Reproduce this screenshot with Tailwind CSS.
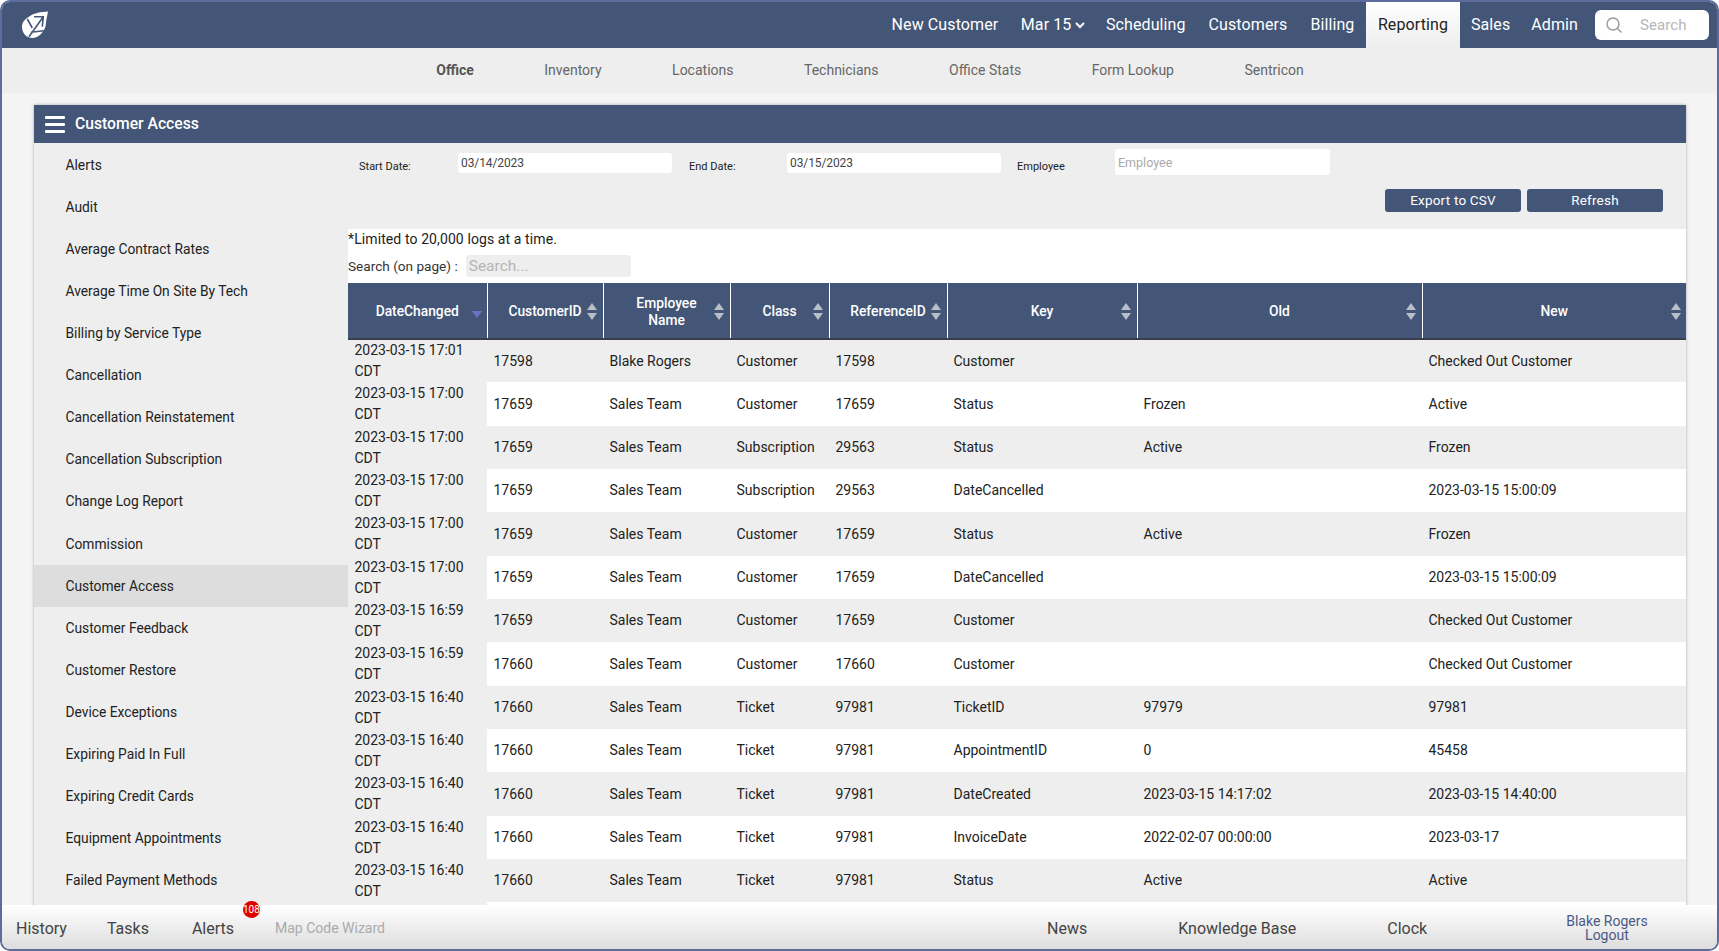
<!DOCTYPE html>
<html lang="en">
<head>
  <meta charset="UTF-8" />
  <title>Customer Access</title>
  <script src="https://cdn.jsdelivr.net/npm/@tailwindcss/browser@4"></script>
</head>
<body class="bg-white font-['Roboto',sans-serif]">
  <div id="app" class="h-[951px] flex flex-col overflow-hidden border-2 border-[#5d6c9c] rounded-[10px] bg-[#f4f4f4] text-[14px] text-[#222]">
    <!-- top nav -->
    <header class="h-[46px] shrink-0 flex items-center bg-[#435677] text-white text-[16px] tracking-[0.1px]">
      <svg class="ml-[20px] w-[26px] h-[28px]" viewBox="0 0 26 28">
        <path d="M26 .5C19 1 12 2 8 5 3 8 0 11 0 16c0 4 2 8 6 10 4 2 9 1 13-3 4-4 5-8 5-12z" fill="white" />
        <path d="M7 25.7L21.3 5.7M12 5.7h9.3l-1 10M5.3 8l5 9M8.7 21.3L22 19.7" fill="none" stroke="#435677" stroke-width="1.6" />
      </svg>
      <nav class="ml-auto flex items-center h-full">
        <a class="px-[11.5px]">New Customer</a>
        <a class="pl-[11px] pr-[9px] flex items-center gap-1">Mar 15
          <svg class="w-[10px] h-[7px]" viewBox="0 0 10 7" fill="none" stroke="white" stroke-width="2"><path d="M1 1l4 4 4-4" /></svg>
        </a>
        <a class="px-[11.5px]">Scheduling</a>
        <a class="px-[11.5px]">Customers</a>
        <a class="px-[11.5px]">Billing</a>
        <a class="w-[94px] h-full flex items-center justify-center bg-gradient-to-b from-white to-[#eeeeee] text-[#222]">Reporting</a>
        <a class="pl-[11px] pr-[10.5px]">Sales</a>
        <a class="pl-[10.5px] pr-[11px]">Admin</a>
        <div class="ml-[6px] mr-[8px] w-[114px] h-[30px] bg-white rounded-[6px] flex items-center text-[#b5b5b5] text-[15px]">
          <svg class="ml-[10px] w-[18px] h-[18px]" viewBox="0 0 18 18" fill="none" stroke="#9a9a9a" stroke-width="1.4"><circle cx="8" cy="8" r="6" /><path d="M12.5 12.5l4 4" /></svg>
          <span class="ml-[17px]">Search</span>
        </div>
      </nav>
    </header>
    <!-- sub nav -->
    <nav class="h-[45px] shrink-0 flex items-center justify-center gap-[70.5px] bg-[#eeeeee] text-[#666] text-[14px] pl-[21px]">
      <a class="font-bold text-[#555]">Office</a>
      <a>Inventory</a>
      <a>Locations</a>
      <a>Technicians</a>
      <a>Office Stats</a>
      <a>Form Lookup</a>
      <a>Sentricon</a>
    </nav>
    <!-- report panel -->
    <main class="flex-1 min-h-0 overflow-hidden pl-[32px] pr-[31px] pt-[12px]">
      <div class="shadow-[0_0_3px_rgba(0,0,0,0.3)] bg-[#eeeeee]">
        <div class="h-[38px] flex items-center bg-[#435677] text-white">
          <svg class="ml-[11px] w-[20px] h-[17px]" viewBox="0 0 20 17" fill="white"><rect y="0" width="20" height="3" rx="1" /><rect y="7" width="20" height="3" rx="1" /><rect y="14" width="20" height="3" rx="1" /></svg>
          <h1 class="ml-[10px] text-[15.7px] font-medium">Customer Access</h1>
        </div>
        <div class="flex">
          <aside class="w-[314px] shrink-0 bg-[#eeeeee]">
            <ul class="pt-[1px] text-[13.8px] [&_li]:h-[42.1px] [&_li]:pl-[31.5px] [&_li]:flex [&_li]:items-center">
              <li>Alerts</li>
              <li>Audit</li>
              <li>Average Contract Rates</li>
              <li>Average Time On Site By Tech</li>
              <li>Billing by Service Type</li>
              <li>Cancellation</li>
              <li>Cancellation Reinstatement</li>
              <li>Cancellation Subscription</li>
              <li>Change Log Report</li>
              <li>Commission</li>
              <li class="bg-[#dddddd]">Customer Access</li>
              <li>Customer Feedback</li>
              <li>Customer Restore</li>
              <li>Device Exceptions</li>
              <li>Expiring Paid In Full</li>
              <li>Expiring Credit Cards</li>
              <li>Equipment Appointments</li>
              <li>Failed Payment Methods</li>
            </ul>
          </aside>
          <section class="flex-1 min-w-0">
            <!-- filters -->
            <div class="h-[86px] bg-[#eeeeee] relative">
              <div class="flex items-start pt-[6px] text-[11px]">
                <label class="ml-[11px] w-[99px] pt-[10px]">Start Date:</label>
                <input class="mt-[4px] w-[214px] h-[20px] bg-white rounded-[3px] px-[3px] text-[12px] tracking-[-0.1px] text-[#444] mr-[16px]" value="03/14/2023" />
                <label class="w-[98px] pt-[10px] ml-[1px]">End Date:</label>
                <input class="mt-[4px] w-[214px] h-[20px] bg-white rounded-[3px] px-[3px] text-[12px] tracking-[-0.1px] text-[#444] mr-[16px]" value="03/15/2023" />
                <label class="w-[98px] pt-[10px]">Employee</label>
                <input class="w-[215px] h-[26px] bg-white rounded-[3px] px-[3px] text-[12.5px] placeholder:text-[#aaa]" placeholder="Employee" />
              </div>
              <div class="absolute top-[46px] right-[23px] flex gap-[6px] text-[13.5px] tracking-[0.2px] text-white">
                <button class="w-[136px] h-[23px] rounded-[3px] bg-[#435677]">Export to CSV</button>
                <button class="w-[136px] h-[23px] rounded-[3px] bg-[#435677]">Refresh</button>
              </div>
            </div>
            <!-- table area -->
            <div class="bg-white">
              <p class="h-[20px] leading-[20px] text-[14px] tracking-[0.1px]">*Limited to 20,000 logs at a time.</p>
              <div class="h-[34px] flex items-center text-[13.6px]">
                <span class="text-[#333]">Search (on page) :</span>
                <input class="ml-[8px] w-[165px] h-[22px] rounded-[3px] bg-[#eeeeee] px-[3px] pt-[2px] text-[15.5px] placeholder:text-[#b5b5b5]" placeholder="Search..." />
              </div>
              <table class="w-full table-fixed border-collapse">
                <colgroup>
                  <col class="w-[139px]" /><col class="w-[116px]" /><col class="w-[127px]" /><col class="w-[99px]" /><col class="w-[118px]" /><col class="w-[190px]" /><col class="w-[285px]" /><col />
                </colgroup>
                <thead class="bg-[#435677] text-white text-[13.8px]">
                  <tr class="h-[56px] border-b-2 border-[#3a3f4c]">
                    <th class="relative pt-[2px] font-medium border-r border-white">DateChanged<svg class="absolute right-[5px] top-[28px] w-[10px] h-[7px]" viewBox="0 0 10 7"><path d="M0 0h10L5 7z" fill="#6a72c8" /></svg></th>
                    <th class="relative pt-[2px] font-medium border-r border-white">CustomerID<svg class="absolute right-[6px] top-[20px] w-[10px] h-[17px]" viewBox="0 0 10 17" fill="#b9bfc9"><path d="M5 0l5 7H0zM5 17l5-7H0z" /></svg></th>
                    <th class="relative pt-[2px] font-medium border-r border-white leading-[17px]">Employee<br />Name<svg class="absolute right-[6px] top-[20px] w-[10px] h-[17px]" viewBox="0 0 10 17" fill="#b9bfc9"><path d="M5 0l5 7H0zM5 17l5-7H0z" /></svg></th>
                    <th class="relative pt-[2px] font-medium border-r border-white">Class<svg class="absolute right-[6px] top-[20px] w-[10px] h-[17px]" viewBox="0 0 10 17" fill="#b9bfc9"><path d="M5 0l5 7H0zM5 17l5-7H0z" /></svg></th>
                    <th class="relative pt-[2px] font-medium border-r border-white">ReferenceID<svg class="absolute right-[6px] top-[20px] w-[10px] h-[17px]" viewBox="0 0 10 17" fill="#b9bfc9"><path d="M5 0l5 7H0zM5 17l5-7H0z" /></svg></th>
                    <th class="relative pt-[2px] font-medium border-r border-white">Key<svg class="absolute right-[6px] top-[20px] w-[10px] h-[17px]" viewBox="0 0 10 17" fill="#b9bfc9"><path d="M5 0l5 7H0zM5 17l5-7H0z" /></svg></th>
                    <th class="relative pt-[2px] font-medium border-r border-white">Old<svg class="absolute right-[6px] top-[20px] w-[10px] h-[17px]" viewBox="0 0 10 17" fill="#b9bfc9"><path d="M5 0l5 7H0zM5 17l5-7H0z" /></svg></th>
                    <th class="relative pt-[2px] font-medium">New<svg class="absolute right-[5px] top-[20px] w-[10px] h-[17px]" viewBox="0 0 10 17" fill="#b9bfc9"><path d="M5 0l5 7H0zM5 17l5-7H0z" /></svg></th>
                  </tr>
                </thead>
                <tbody id="rows" class="[&_td]:px-[6.5px] [&_td]:h-[43px] [&_tr:nth-child(3n+2)_td]:h-[44px] [&_td]:leading-[21px] [&_td:first-child]:bg-[#eeeeee] [&_tr:nth-child(odd)]:bg-[#eeeeee]">
                  <tr><td>2023-03-15 17:01 CDT</td><td>17598</td><td>Blake Rogers</td><td>Customer</td><td>17598</td><td>Customer</td><td></td><td>Checked Out Customer</td></tr>
                  <tr><td>2023-03-15 17:00 CDT</td><td>17659</td><td>Sales Team</td><td>Customer</td><td>17659</td><td>Status</td><td>Frozen</td><td>Active</td></tr>
                  <tr><td>2023-03-15 17:00 CDT</td><td>17659</td><td>Sales Team</td><td>Subscription</td><td>29563</td><td>Status</td><td>Active</td><td>Frozen</td></tr>
                  <tr><td>2023-03-15 17:00 CDT</td><td>17659</td><td>Sales Team</td><td>Subscription</td><td>29563</td><td>DateCancelled</td><td></td><td>2023-03-15 15:00:09</td></tr>
                  <tr><td>2023-03-15 17:00 CDT</td><td>17659</td><td>Sales Team</td><td>Customer</td><td>17659</td><td>Status</td><td>Active</td><td>Frozen</td></tr>
                  <tr><td>2023-03-15 17:00 CDT</td><td>17659</td><td>Sales Team</td><td>Customer</td><td>17659</td><td>DateCancelled</td><td></td><td>2023-03-15 15:00:09</td></tr>
                  <tr><td>2023-03-15 16:59 CDT</td><td>17659</td><td>Sales Team</td><td>Customer</td><td>17659</td><td>Customer</td><td></td><td>Checked Out Customer</td></tr>
                  <tr><td>2023-03-15 16:59 CDT</td><td>17660</td><td>Sales Team</td><td>Customer</td><td>17660</td><td>Customer</td><td></td><td>Checked Out Customer</td></tr>
                  <tr><td>2023-03-15 16:40 CDT</td><td>17660</td><td>Sales Team</td><td>Ticket</td><td>97981</td><td>TicketID</td><td>97979</td><td>97981</td></tr>
                  <tr><td>2023-03-15 16:40 CDT</td><td>17660</td><td>Sales Team</td><td>Ticket</td><td>97981</td><td>AppointmentID</td><td>0</td><td>45458</td></tr>
                  <tr><td>2023-03-15 16:40 CDT</td><td>17660</td><td>Sales Team</td><td>Ticket</td><td>97981</td><td>DateCreated</td><td>2023-03-15 14:17:02</td><td>2023-03-15 14:40:00</td></tr>
                  <tr><td>2023-03-15 16:40 CDT</td><td>17660</td><td>Sales Team</td><td>Ticket</td><td>97981</td><td>InvoiceDate</td><td>2022-02-07 00:00:00</td><td>2023-03-17</td></tr>
                  <tr><td>2023-03-15 16:40 CDT</td><td>17660</td><td>Sales Team</td><td>Ticket</td><td>97981</td><td>Status</td><td>Active</td><td>Active</td></tr>
                  <tr><td></td><td></td><td></td><td></td><td></td><td></td><td></td><td></td></tr>
                </tbody>
              </table>
            </div>
          </section>
        </div>
      </div>
    </main>
    <!-- bottom bar -->
    <footer class="h-[44px] shrink-0 relative flex items-center pt-[3px] bg-gradient-to-b from-white to-[#dddddd] text-[#444] text-[16px]">
      <a class="ml-[14px]">History</a>
      <a class="ml-[40px]">Tasks</a>
      <a class="ml-[43px] relative">Alerts
        <span class="absolute left-[51px] -top-[16px] w-[17px] h-[17px] rounded-full bg-[#e00000] text-white text-[10px] leading-[17px] text-center overflow-hidden">108</span>
      </a>
      <a class="ml-[41px] text-[14px] text-[#aaa]">Map Code Wizard</a>
      <a class="ml-[662px]">News</a>
      <a class="ml-[91px]">Knowledge Base</a>
      <a class="ml-[91px]">Clock</a>
      <div class="ml-[139px] -mt-[2px] text-center text-[14px] leading-[14px] text-[#4a5a84]"><div>Blake Rogers</div><div>Logout</div></div>
    </footer>
  </div>
</body>
</html>
